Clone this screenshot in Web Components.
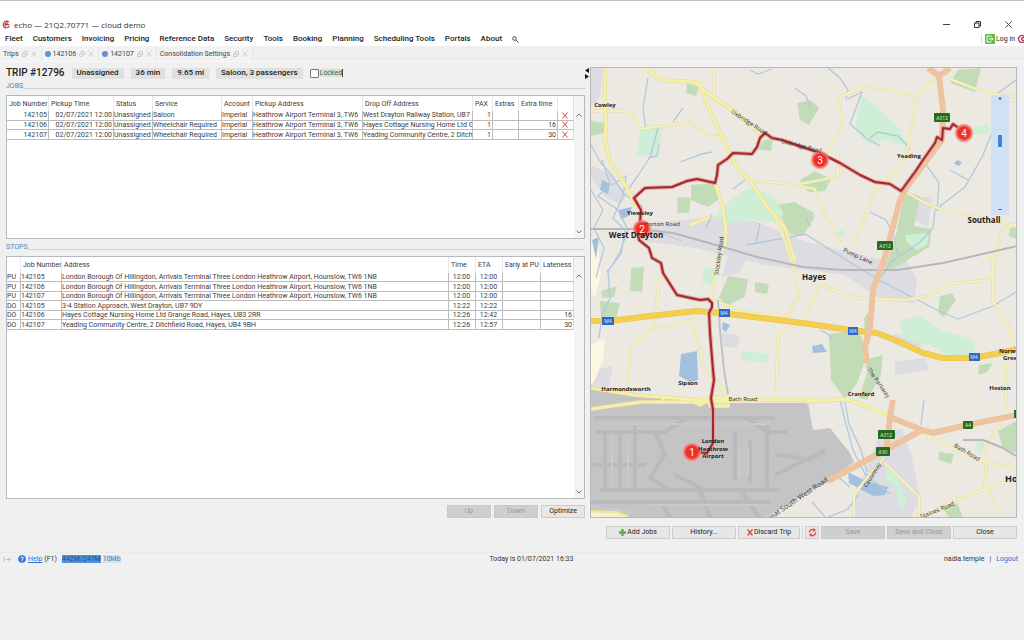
<!DOCTYPE html>
<html lang="en">
<head>
<meta charset="utf-8">
<title>echo — 21Q2.70771 — cloud demo</title>
<style>
  html { background: #f0f0f0; }
  body { margin: 0; font: 7px/8px Roboto, "Liberation Sans", sans-serif; color: #3c3c3c; }
</style>
</head>
<body>
<echo-app></echo-app>

<template id="t-app">
  <style>
    :host { display: block; border-top: 1px solid #c4c4c4; }
    .top { background: #fff; padding-top: 16px; }
    .work { display: grid; grid-template-columns: minmax(0, 579fr) minmax(0, 427fr); column-gap: 5px; padding: 5px 7px 0 6px; align-items: stretch; }
    .left { display: flex; flex-direction: column; min-width: 0; }
    .jobs { flex: 158 1 0; }
    .stops { flex: 257 1 0; padding-top: 2px; }
    .frame-actions { display: flex; justify-content: flex-end; gap: 3px; padding-top: 6px; }
    .trip-actions { display: grid; grid-template-columns: 64fr 64fr 62fr 1px 14px 64fr 64fr 64fr; gap: 2px; margin: 8px 7px 0 auto; width: 411px; }
    .sep { background: #d8d8d8; }
    .frame-actions echo-button { width: 44px; }
  </style>
  <header class="top">
    <echo-titlebar>echo — 21Q2.70771 — cloud demo</echo-titlebar>
    <echo-menu></echo-menu>
  </header>
  <echo-tabs></echo-tabs>
  <main>
    <div class="work">
      <div class="left">
        <trip-header></trip-header>
        <echo-section class="jobs" label="JOBS"><jobs-table></jobs-table></echo-section>
        <echo-section class="stops" label="STOPS"><stops-table></stops-table></echo-section>
        <div class="frame-actions">
          <echo-button disabled>Up</echo-button>
          <echo-button disabled>Down</echo-button>
          <echo-button>Optimize</echo-button>
        </div>
      </div>
      <route-map></route-map>
    </div>
    <div class="trip-actions">
      <echo-button><svg width="7" height="7" viewBox="0 0 7 7"><path d="M2.3 0h2.4v2.3H7v2.4H4.700V7H2.300V4.700H0V2.300h2.300z" fill="#62ae3c"/></svg> Add Jobs</echo-button>
      <echo-button>History...</echo-button>
      <echo-button><svg width="6" height="7" viewBox="0 0 6 7"><path d="M.5.5l5 6M5.500.5l-5 6" stroke="#e04038" stroke-width="1.200"/></svg> Discard Trip</echo-button>
      <span class="sep"></span>
      <echo-button label="Refresh"><svg width="9" height="9" viewBox="0 0 9 9"><rect width="9" height="9" fill="#f6dcd8"/><path d="M1.500 4.500a3 3 0 0 1 4.500-2.700M7.500 4.500a3 3 0 0 1-4.500 2.700" fill="none" stroke="#dc5148" stroke-width="1.400"/><path d="M5.200 0l3 2.300-3 1.700zM3.800 5v4l-3-2.300z" fill="#dc5148"/></svg></echo-button>
      <echo-button disabled>Save</echo-button>
      <echo-button disabled>Save and Close</echo-button>
      <echo-button>Close</echo-button>
    </div>
  </main>
  <echo-status></echo-status>
</template>

<template id="t-titlebar">
  <style>
    :host { display: flex; align-items: center; height: 15px; font: 8px/10px "Open Sans", "Noto Sans", sans-serif; color: #333; }
    .logo { margin: 0 4px 0 2px; flex: none; }
    .controls { margin-left: auto; display: flex; }
    button { width: 31px; height: 15px; padding: 0; border: 0; background: none; display: grid; place-items: center; }
    svg { display: block; }
  </style>
  <svg class="logo" width="8" height="9" viewBox="0 0 8 9"><g fill="none" stroke="#b9394a" stroke-width="1.300"><path d="M6.800 2A3.400 3.400 0 1 0 4 8"/><path d="M5.800 3.300A1.700 1.700 0 1 0 4 6.200M3.500 4.600h3.900M4.500 7.900L7.600 6.500"/></g></svg>
  <slot></slot>
  <div class="controls">
    <button aria-label="Minimize"><svg width="7" height="7"><path d="M0 3.500h7" stroke="#444"/></svg></button>
    <button aria-label="Restore"><svg width="7" height="7" fill="none" stroke="#333"><path d="M.5 2h4.500v4.500H.5zM2 2V.5h4.500V5H5"/></svg></button>
    <button aria-label="Close window"><svg width="7" height="7" stroke="#444"><path d="M.5.5l6 6M6.500.5l-6 6"/></svg></button>
  </div>
</template>

<template id="t-menu">
  <style>
    :host { display: flex; align-items: center; height: 14px; padding-left: 5px; font-size: 8px; line-height: 10px; font-weight: 500; color: #222; }
    nav { display: flex; gap: 10px; align-items: center; }
    button { all: unset; }
    svg { display: block; flex: none; }
    .login { margin-left: auto; display: flex; align-items: center; gap: 1px; padding-left: 3px; border-left: 1px solid #ddd; font-size: 7px; font-weight: 400; }
  </style>
  <nav>
    <button>Fleet</button><button>Customers</button><button>Invoicing</button><button>Pricing</button><button>Reference Data</button><button>Security</button><button>Tools</button><button>Booking</button><button>Planning</button><button>Scheduling Tools</button><button>Portals</button><button>About</button>
    <button aria-label="Search"><svg width="7" height="7" viewBox="0 0 7 7" fill="none" stroke="#444"><circle cx="2.500" cy="2.500" r="1.800"/><path d="M4 4l2.500 2.500"/></svg></button>
  </nav>
  <button class="login"><svg width="10" height="10" viewBox="0 0 10 10"><rect width="10" height="10" rx="1" fill="#5fbe3f"/><path d="M6.500 2H2v6h4.500M4 5h4M6.500 3.500L8 5 6.500 6.500" fill="none" stroke="#fff"/></svg>Log in<svg width="8" height="8" viewBox="0 0 8 8"><path d="M8 1.300A3.400 3.400 0 1 0 8 6.700M8 3A1.400 1.400 0 1 0 8 5" fill="none" stroke="#bb3448" stroke-width="1.300"/></svg></button>
</template>

<template id="t-tabs">
  <style>
    :host { display: flex; height: 15px; background: #efefef; color: #444; border-bottom: 1px solid #f8f8f8; }
    .tab { display: flex; align-items: center; gap: 1px; padding: 0 4px 0 3px; border-right: 1px solid #e6e6e6; background: #f2f2f2; }
    .tab:first-child { background: #fafafa; }
    button { all: unset; }
    i { width: 6px; height: 6px; border-radius: 50%; background: #5b93d3; flex: none; margin-right: 1px; }
    svg { display: block; fill: none; stroke: #cdcdcd; margin-left: 2px; }
  </style>
</template>

<template id="t-header">
  <style>
    :host { display: flex; align-items: center; height: 12px; font-size: 8px; line-height: 10px; font-weight: 500; color: #222; gap: 7px; margin-bottom: 1px; }
    h1 { margin: 0; font-size: 10px; line-height: 12px; font-weight: 500; }
    .chip { background: #dfe0df; padding: 0 5px; height: 11px; white-space: nowrap; }
    label { display: flex; align-items: center; gap: 1px; font-size: 7px; line-height: 8px; font-weight: 400; color: #555; }
    label span { background: #d4e4cf; border-right: 1px solid #444; }
    input { appearance: none; margin: 0; width: 9px; height: 9px; border: 1px solid #777; border-radius: 1px; background: #fff; }
    svg { margin-left: auto; display: block; margin-right: -4px; }
  </style>
  <h1>TRIP #12796</h1>
  <span class="chip">Unassigned</span><span class="chip">36 min</span><span class="chip">9.65 mi</span><span class="chip">Saloon, 3 passengers</span>
  <label><input type="checkbox"><span>Locked</span></label>
  <svg width="4" height="12"><path d="M4 1v5L0 3.500zM0 7v5l4-2.500z" fill="#111"/></svg>
</template>

<template id="t-section">
  <style>
    :host { display: flex; flex-direction: column; min-height: 0; }
    h2 { display: flex; margin: 0 0 5px; font-size: 7px; line-height: 8px; height: 8px; font-weight: 400; color: #5585b5; padding-top: 2px; }
    h2::after { content: ""; flex: 1; border-bottom: 1px solid #c9d2dd; height: 6px; }
    .frame { flex: 1; display: flex; border: 1px solid #b5b8bd; background: #fff; min-height: 0; }
    .body { flex: 1; min-width: 0; overflow: hidden; }
    .bar { width: 10px; background: #f3f3f3; padding: 14px 0 1px; display: flex; flex-direction: column; justify-content: space-between; align-items: center; }
    button { all: unset; display: grid; place-items: center; width: 10px; height: 10px; }
    svg { display: block; fill: none; stroke: #777; }
  </style>
  <h2></h2>
  <div class="frame"><div class="body"><slot></slot></div>
    <div class="bar"><button aria-label="Scroll up"><svg width="6" height="4"><path d="M.5 3.500L3 1l2.500 2.500"/></svg></button><button aria-label="Scroll down"><svg width="6" height="4"><path d="M.5.5L3 3 5.500.5"/></svg></button></div>
  </div>
</template>

<template id="t-button">
  <style>
    :host { display: block; }
    button { width: 100%; height: 13px; padding: 0; margin: 0; border: 1px solid #cdcdcd; background: #e7e7e7; color: #222; font: inherit; line-height: 9px; display: flex; align-items: center; justify-content: center; gap: 1px; white-space: nowrap; }
    button:disabled { background: #cfcfcf; border-color: #c8c8c8; color: #999; }
  </style>
  <button><slot></slot></button>
</template>

<template id="t-map">
  <style>
    :host { display: block; position: relative; border: 1px solid #b5b8bd; box-sizing: border-box; aspect-ratio: 427 / 451; overflow: hidden; }
    svg { display: block; width: 100%; height: 100%; }
    .zoom { position: absolute; top: 6%; right: 7px; width: 18px; height: 120px; background: #cfe1f3; display: flex; flex-direction: column; align-items: center; color: #222; }
    .zoom button { all: unset; height: 9px; }
    .zoom input { appearance: none; writing-mode: vertical-lr; flex: 1; min-height: 0; width: 10px; margin: 0; background: none; }
    .zoom input::-webkit-slider-thumb { appearance: none; width: 4px; height: 12px; background: #3f86d8; }
    text { font: 700 6px "Open Sans", "Noto Sans", sans-serif; fill: #1c1c1c; text-anchor: middle; }
    .town { font-size: 8px; }
    .road { font-weight: 400; fill: #333; }
    .shield text { fill: #e8f0e0; font-size: 5px; font-weight: 400; }
    .pin text { fill: #fff; font: 400 10px Roboto, sans-serif; }
  </style>
  <svg viewBox="591 68 425 449" preserveAspectRatio="xMidYMid slice" role="img" aria-label="Route from London Heathrow Airport to Yeading">
    <defs>
      <path id="minor" d="M591 111h33l8 4 8 14 30-4 20-3 20 14 18 2M714 68v26M800 184l26-5 12-4 0-22M826 154l17-30-6-26 30-12 50 10 13-14 14-10M917 96l-9 50-6 20-28 26-20 52M660 276l-6 50-24 22-2 37M654 330l36-10 8 22 6 24 22 27M690 310l8 12M710 301l3-14 13-50M715 301l35 12 38 3 10-20-4-28-10-30-12-26-12-18M752 180l36 4 27 5 10 25 16 30M798 324l-20 10-2 66M803 321l17-36 36 13 50 2 22-4 22-12 40-4 12-50 20-8M948 78l25 10 30 8h13M903 190l20 12 20 8 75 16M986 257l7 1v44l14 20 6 25-8 18 2 50-20 30-2 40 14 27M922 433l60 28 34 8M1016 478l-60 22-30 16M885 463l34 34v20M884 458l-30 36 0 22"/>
      <path id="major" d="M605 68v36l1 20-1 15 4 20 18 29 10 20M645 68l15 12 35 2 11 10 26 18 32 27M700 82l6 20 21 46 10 20 14 14 14 22 20 24 10 34M715 183l8 24 3 25-1 14M690 225l20-8M591 388l44 7 65 5h120M591 409l50-7h85M806 402l40-3 22 8 24 10M728 396v10h-18v-9h18M663 397v6M690 400l10 5 10-6"/>
      <path id="motorway" d="M591 321h19l40-5 47-5 33 3 80 10 40 6 27 3 23 9 23 11 20 5h30l27-5 17-4"/>
      <path id="route" d="M964 132l-11-8-3 5-7-1-1 12-5-3-2 6-12 17-8 12-14 19-11-7-15-2-15-7-20-12-20-10-38-13-10-2-7-5-5 5-3 9-5 7-19-1-6 6-9 6-1 10-2 8-18-4-10 2-15 6-27 1-11 10 7 12-1 12-1 18 10 8 3 10 9 5 2 10 14 22 23 5 8-1 4 4v4l-3 6 1 20 3 37 1 10-3 18 2 12v33l-6 10-14-1"/>
    </defs>
    <rect x="591" y="68" width="425" height="449" fill="#ece9e2"/>
    <path fill="#dcdce1" d="M591 68h12l-3 28-9 12zM591 165l20 10 16 20-6 9-14-6-16-20zM640 224l72-7 42 4 50 20 40 10 40 9 20-5 13 25-3 23-34-4-35-24-30-4-50-6-70-17-60-8zM900 197h32l-4 30-18-10zM728 255h20l-8 17-18 5zM880 434l22-6 10 30 8 40-10 20h-58l3-20zM722 333l18 3-3 12-14-2zM893 334l30 6-4 10-24-4zM591 370l22-4-5 22-17-4zM895 362l30-4 4 12-34 5z"/>
    <path fill="#c3dcb8" d="M591 121l16 2-4 10-12 3zM687 83l12 4-3 9-10-3zM797 103l14-3 8 8-10 17-9-5zM958 70l23-2-6 24-25-9zM691 185l24-2 7 14-14 10-17-7zM678 197l13 1-2 15h-12zM763 141l10-3-2 13-14-2zM775 205l20-3 20 14-12 20-13-2zM800 180l15-9 16 8-6 12-17 1zM800 205l14 8-4 14h-10zM631 268l13-1-2 25-12-1zM601 291l16-5-3 11-12 1zM600 301l20 2-4 16-15-2zM728 276l20 3-3 18-18 9-8-8zM755 282l14 2-2 10-12-2zM905 192l15 4-6 30 18 3-3 18-40 24-4-4 10-28zM829 334l30-4 8 25-10 28-12 16-14-19zM865 360l18-5-2 20-14 25-8-2 8-25zM940 296l12-3 4 7-12 17-6-4zM998 431l18-10v32l-13-5zM939 452l15 2-3 10-12-4zM943 509l14-6 6 14h-14zM979 365l14-2-6 9-9 3zM864 318l6-8 3 16-8 7zM1010 225l6 3v11l-7-3z"/>
    <path fill="#cfeed6" d="M640 130l22-2-3 28-22-1zM732 199l17-11 22 6 12 18-2 12-30-5-24 5-14-6zM862 95l14 12 22 20 9 17-8 1-14-6-15 7-15-18 3-15zM965 130l24-6v9l-22 2zM905 235l24-2-2 12-10 5-10-7zM704 268l12 1-2 17-12-3zM900 320l20-4 20 14 34 10 2 13-24 4-22-12-28-7zM741 351l28 3-2 9-25-3zM885 467l12 8 10 28-6 8-7-25-9-8zM976 443l8-4v12l-6 2zM836 232l8-3 2 6-9 2z"/>
    <path d="M591 385l30 9 100 9h87l5 27 17-2 20 25 4 9-28 20-60 35H591z" fill="#c4c4c4"/>
    <path fill="none" stroke="#bababd" stroke-width="4" d="M595 418h180M595 432h70l22-14h60l20 14h20M605 432v60M620 432v60M635 425v65M600 490h180M591 502h180M655 432l10 22-15 24 20 12M675 475l30 15h40M735 432v48M750 440v44M767 425v62M775 454l35 6 15-10M775 475l40-20M591 465h55M660 500l10 18M700 490l10 28M740 490l20 28"/>
    <path fill="none" stroke="#cacacd" stroke-width="2" d="M600 424h170M612 436v50M628 440v45M645 505h120M740 450h8v25h-8zM595 507l40 6"/>
    <path d="M591 512l30 1 10 5h-40z" fill="#f5f2cf"/>
    <path d="M591 345l14-7-2 22-8 20-4 5zM591 245h7l3 30-6 22-4-4z" fill="#fbf7e0"/>
    <path fill="#a3c0de" d="M681 354l16-3 1 29-8 2-11-6zM848 472l18 9 22 6-3 8-12 1-24-13zM723 322l7 3-4 7-4-3zM602 180l8 4-2 10-8-4zM812 346l10-2 5 8-14 1zM957 160l5 2-3 4-5-2zM618 210l14-3-3 9-8 3zM592 240l7-3-3 22z"/>
    <path fill="none" stroke="#b1c8de" stroke-width="1.300" d="M591 145l10 18 12 14 10 16 20 14M602 160l8 24-12 12 20 14 10 20-8 22-12 20 2 26-8 16-3 24M612 185l14-9-3 20-10 22 12 12-4 24-14 18M591 190l12 20-9 18 10 20-8 30M648 78l-5 30 3 22M658 128l-8 29-13 20-10 14M659 144l-2 12-9 2M680 162l22-8 10-2M683 108l-10 14M828 68l12 10 8 12-2 10M750 70l8 4 14-5M795 88l11 8 5 12M848 99l14-7-12 32 16 14 14 8M870 138l8-6 20 4 6 6 6 8M925 163l14 20-2 28M995 125l-12 30-18 32-30 23-2 18-14 15-28 19-10 16M950 170l18 10M998 93l18-13M870 212l16 8 8 16 4 20M660 233l22 8M712 214l-6 14M747 245l58-11 72 45 60 31 21 9 35-13 23-14M833 340l-5-6-8-4M840 400l5 20 8 30 12 24 25 20M845 402l4 22 12 26 6 22M924 400l-3 25M812 502l14 16 22-9 10-14M836 475l14 12M733 189l12-9M725 212v20M760 223l-4 20M806 218l4 8"/>
    <g fill="none" stroke-linejoin="round">
      <use href="#minor" stroke="#dfdcae" stroke-width="3"/>
      <use href="#minor" stroke="#f4f0bf" stroke-width="2"/>
      <use href="#major" stroke="#dfdaa4" stroke-width="4"/>
      <use href="#major" stroke="#f5efaa" stroke-width="3"/>
      <path d="M591 511l25 1 12 4" stroke="#f0e88a" stroke-width="2"/>
      <path d="M718 300l2 30 4 40 4 24" stroke="#c3c3c5" stroke-width="2"/>
      <path d="M591 229h46l36 4 50 14 34 10 46 10 40 3h54l46-7 44-10 30-7M963 440l20 0 20 8 13 8" stroke="#b8b6b9" stroke-width="2"/>
      <use href="#motorway" stroke="#e2c458" stroke-width="6"/>
      <use href="#motorway" stroke="#f4ce4c" stroke-width="5"/>
      <path d="M928 68l11 8 11-8M939 76l4 34-1 30-36 48-6 12-15 57-12 33-3 37-5 20 2 16M893 400l-3 17-4 36M890 417l32 13M828 481l52-28 42-23 11 3 34-8 50-10" stroke="#edc3a0" stroke-width="6"/>
      <use href="#route" stroke="#dda19b" stroke-width="4"/>
      <use href="#route" stroke="#a5272c" stroke-width="2"/>
    </g>
    <g class="pin" fill="#ee2f27">
      <g stroke="#f58a80" stroke-opacity=".6" stroke-width="3"><circle cx="692" cy="452" r="8"/><circle cx="642" cy="229" r="8"/><circle cx="820" cy="160" r="8"/><circle cx="964" cy="133" r="8"/></g>
      <text x="692" y="456">1</text><text x="642" y="233">2</text><text x="820" y="164">3</text><text x="964" y="137">4</text>
    </g>
    <text x="605" y="107">Cowley</text><text x="640" y="215">Yiewsley</text><text x="909" y="158">Yeading</text>
    <text x="626" y="391">Harmondsworth</text><text x="688" y="385">Sipson</text><text x="861" y="396">Cranford</text><text x="1000" y="390">Heston</text>
    <text x="713" y="443">London</text><text x="713" y="451">Heathrow</text><text x="713" y="458">Airport</text>
    <text style="text-anchor:start" x="999" y="353">Norwood</text><text style="text-anchor:start" x="1003" y="360">Green</text>
    <text class="town" x="636" y="238">West Drayton</text><text class="town" x="814" y="280">Hayes</text><text class="town" x="984" y="223">Southall</text>
    <text style="text-anchor:start;font-size:9px" x="1005" y="482">Hounslow</text>
    <text class="road" transform="translate(748 124) rotate(33)">Uxbridge Road</text>
    <text class="road" transform="translate(801 148) rotate(14)">Uxbridge Road</text>
    <text class="road" x="662" y="226">Horton Road</text><text class="road" x="743" y="401">Bath Road</text>
    <text class="road" transform="translate(721 256) rotate(-82)">Stockley Road</text>
    <text class="road" transform="translate(857 258) rotate(25)">Pump Lane</text>
    <text class="road" transform="translate(877 384) rotate(55)">The Parkway</text>
    <text class="road" transform="translate(966 454) rotate(30)">Bath Road</text>
    <text class="road" transform="translate(874 476) rotate(-58)">Causeway</text>
    <text class="road" transform="translate(938 512) rotate(-22)">Staines Road</text>
    <text class="road" style="font-size:7px" transform="translate(797 502) rotate(-34)">Great South West Road</text>
    <g class="shield">
      <g fill="#256b1c"><rect x="934" y="113" width="16" height="9" rx="1"/><rect x="877" y="241" width="16" height="9" rx="1"/><rect x="878" y="430" width="17" height="9" rx="1"/><rect x="876" y="447" width="14" height="9" rx="1"/><rect x="963" y="421" width="10" height="8" rx="1"/><rect x="1014" y="410" width="4" height="8"/></g>
      <g fill="#2f69cf"><rect x="602" y="317" width="12" height="8"/><rect x="719" y="309" width="11" height="8"/><rect x="848" y="327" width="10" height="8"/><rect x="969" y="353" width="11" height="8"/></g>
      <text x="942" y="120">A312</text><text x="885" y="248">A312</text><text x="886" y="437">A312</text><text x="883" y="454">A30</text><text x="968" y="427">A4</text>
      <text x="608" y="323">M4</text><text x="724" y="315">M4</text><text x="853" y="333">M4</text><text x="974" y="359">M4</text>
    </g>
  </svg>
  <div class="zoom"><button aria-label="Zoom in">+</button><input type="range" aria-label="Zoom level" min="0" max="20" value="7"><button aria-label="Zoom out">–</button></div>
</template>

<template id="t-status">
  <style>
    :host { display: grid; grid-template-columns: 488fr auto 446fr; align-items: center; margin-top: 13px; padding: 2px 6px 0 3px; border-top: 1px solid #e9e9e9; color: #333; }
    div { display: flex; align-items: center; gap: 2px; }
    .end { justify-content: flex-end; gap: 5px; }
    a { color: #2e6fd8; }
    .end a { text-decoration: none; }
    .help { margin-left: 5px; }
    .mem { background: #4f91da; color: #1f4f93; margin-left: 3px; }
    .rest { background: #d6e2f0; color: #5578a5; }
    svg { display: block; }
  </style>
  <div><svg width="8" height="7" fill="none" stroke="#b4c4b0"><path d="M1 1v5M3 3.500h4M5.500 1.500L7.500 3.500 5.500 5.500"/></svg>
    <svg class="help" width="8" height="8"><circle cx="4" cy="4" r="3.800" fill="#2f6fe0"/><path d="M2.700 3.300a1.300 1.300 0 1 1 1.300 1.300v1.600" fill="none" stroke="#fff" stroke-width=".9"/></svg>
    <a href="#help">Help</a><span>(F1)</span><span class="mem">442M/247M</span><span class="rest">10Mb</span></div>
  <span>Today is 01/07/2021 16:33</span>
  <div class="end"><span>nadia.temple</span><span>|</span><a href="#logout">Logout</a></div>
</template>

<script>
const tpl = id => document.getElementById(id).content.cloneNode(true);
const define = (name, id, setup) => customElements.define(name, class extends HTMLElement {
  constructor() {
    super();
    this.attachShadow({ mode: 'open' }).append(tpl(id));
    if (setup) setup.call(this, this.shadowRoot);
  }
  connectedCallback() { if (this.shadowRoot.onready) this.shadowRoot.onready(); }
});

define('echo-titlebar', 't-titlebar');
define('echo-menu', 't-menu');
define('echo-tabs', 't-tabs', root => {
  const tabs = [['Trips', false], ['142106', true], ['142107', true], ['Consolidation Settings', false]];
  for (const [name, dot] of tabs) {
    const tab = document.createElement('div');
    tab.className = 'tab';
    tab.innerHTML = `${dot ? '<i></i>' : ''}<button>${name}</button>
      <svg width="6" height="6"><path d="M.5 2.500h3v3h-3zM2 2V.5h3.500V4H4"/></svg>
      <svg width="6" height="6"><path d="M.5.5l5 5M5.500.5l-5 5"/></svg>`;
    root.append(tab);
  }
});
define('trip-header', 't-header');
define('echo-section', 't-section', function (root) {
  root.onready = () => { root.querySelector('h2').textContent = this.getAttribute('label'); };
});
define('echo-button', 't-button', function (root) {
  root.onready = () => {
    const button = root.querySelector('button');
    button.disabled = this.hasAttribute('disabled');
    if (this.hasAttribute('label')) button.setAttribute('aria-label', this.getAttribute('label'));
  };
});
define('route-map', 't-map');
define('echo-status', 't-status');

const tableStyle = `
  :host { display: block; }
  table { width: 100%; table-layout: fixed; border-collapse: separate; border-spacing: 0; line-height: 8px; }
  th, td { padding: 0 1px 0 0; font-weight: 400; text-align: left; white-space: nowrap; overflow: hidden; border-right: 1px solid #bcbcbc; }
  th { border-color: #e8e8e8; padding: 0 2px; }
  td { border-bottom: 1px solid #bcbcbc; }
  th:last-child, td:last-child { border-right-color: #ddd; }
  .r { text-align: right; }
  .c { text-align: center; }
  svg { display: block; margin: auto; }`;
const renderTable = (root, { label, cols, rows, headHeight, height }) => {
  root.innerHTML = `<style>${tableStyle} table { height: ${height}px; } thead tr { height: ${headHeight}px; }</style>
    <table aria-label="${label}">
      <colgroup>${cols.map(c => `<col${c.width ? ` style="width:${c.width}px"` : ''}>`).join('')}</colgroup>
      <thead><tr>${cols.map(c => `<th>${c.name}</th>`).join('')}</tr></thead>
      <tbody>${rows.map(r => `<tr>${r.map((v, i) => `<td class="${cols[i].cls || ''}">${v}</td>`).join('')}</tr>`).join('')}</tbody>
    </table>`;
};
const cross = '<svg width="6" height="7" viewBox="0 0 6 7"><path d="M.5.5l5 6M5.500.5l-5 6" stroke="#e0483e"/></svg>';
const pickup = 'Heathrow Airport Terminal 3, TW6';

customElements.define('jobs-table', class extends HTMLElement {
  constructor() {
    super();
    renderTable(this.attachShadow({ mode: 'open' }), {
      label: 'Jobs', headHeight: 15, height: 44,
      cols: [
        { name: 'Job Number', width: 42, cls: 'r' }, { name: 'Pickup Time', width: 65, cls: 'r' },
        { name: 'Status', width: 39 }, { name: 'Service', width: 69 }, { name: 'Account', width: 31 },
        { name: 'Pickup Address' }, { name: 'Drop Off Address' },
        { name: 'PAX', width: 20, cls: 'r' }, { name: 'Extras', width: 26 },
        { name: 'Extra time', width: 39, cls: 'r' }, { name: '', width: 16 }
      ],
      rows: [
        ['142105', '02/07/2021 12:00', 'Unassigned', 'Saloon', 'Imperial', pickup, 'West Drayton Railway Station, UB7', '1', '', '', cross],
        ['142106', '02/07/2021 12:00', 'Unassigned', 'Wheelchair Required', 'Imperial', pickup, 'Hayes Cottage Nursing Home Ltd Gr', '1', '', '16', cross],
        ['142107', '02/07/2021 12:00', 'Unassigned', 'Wheelchair Required', 'Imperial', pickup, 'Yeading Community Centre, 2 Ditch', '1', '', '30', cross]
      ]
    });
  }
});
customElements.define('stops-table', class extends HTMLElement {
  constructor() {
    super();
    const terminal = 'London Borough Of Hillingdon, Arrivals Terminal Three London Heathrow Airport, Hounslow, TW6 1NB';
    renderTable(this.attachShadow({ mode: 'open' }), {
      label: 'Stops', headHeight: 16, height: 73,
      cols: [
        { name: '', width: 14 }, { name: 'Job Number', width: 41 }, { name: 'Address' },
        { name: 'Time', width: 27, cls: 'c' }, { name: 'ETA', width: 27, cls: 'c' },
        { name: 'Early at PU', width: 38 }, { name: 'Lateness', width: 33, cls: 'r' }
      ],
      rows: [
        ['PU', '142105', terminal, '12:00', '12:00', '', ''],
        ['PU', '142106', terminal, '12:00', '12:00', '', ''],
        ['PU', '142107', terminal, '12:00', '12:00', '', ''],
        ['DO', '142105', '3-4 Station Approach, West Drayton, UB7 9DY', '12:22', '12:22', '', ''],
        ['DO', '142106', 'Hayes Cottage Nursing Home Ltd Grange Road, Hayes, UB3 2RR', '12:26', '12:42', '', '16'],
        ['DO', '142107', 'Yeading Community Centre, 2 Ditchfield Road, Hayes, UB4 9BH', '12:26', '12:57', '', '30']
      ]
    });
  }
});
define('echo-app', 't-app');
</script>
</body>
</html>
